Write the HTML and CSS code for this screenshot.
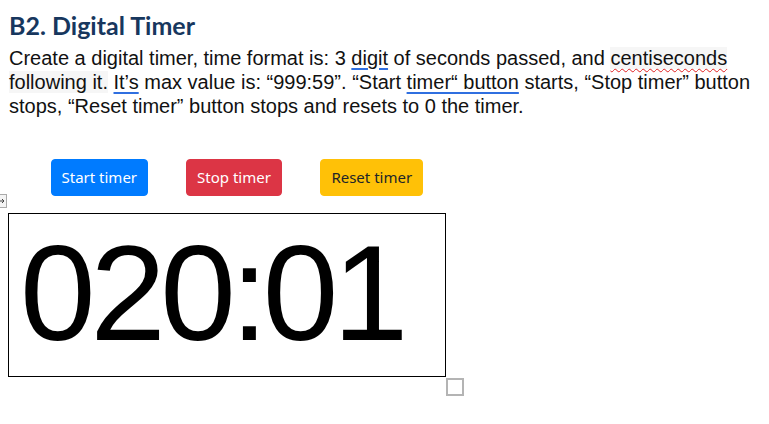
FILE: index.html
```html
<!DOCTYPE html>
<html>
<head>
<meta charset="utf-8">
<link rel="stylesheet" href="styles.css">
</head>
<body>
<div class="doc">
  <h1 class="title">B2. Digital Timer</h1>
  <p class="desc">Create a digital timer, time format is: 3 <span class="gram">digit</span> of seconds passed, and <span class="hl spell">centiseconds</span><br><span class="hl">following it.</span> <span class="gram">It’s</span> max value is: “999:59”. “Start <span class="gram">timer“ button</span> starts, “Stop timer” button<br>stops, “Reset timer” button stops and resets to 0 the timer.</p>
  <div class="buttons">
    <button class="btn btn-start">Start timer</button>
    <button class="btn btn-stop">Stop timer</button>
    <button class="btn btn-reset">Reset timer</button>
  </div>
  <div class="timer-wrap">
    <div class="move-handle">
      <svg width="8" height="8" viewBox="0 0 8 8"><path d="M0 4h6M4 2l2 2-2 2" stroke="#444" stroke-width="1" fill="none"/></svg>
    </div>
    <div class="timer">020:01</div>
    <div class="resize-handle"></div>
  </div>
</div>
</body>
</html>
```
FILE: styles.css
```css
html, body {
  margin: 0;
  padding: 0;
  background: #fff;
  min-height: 424px;
}
.doc {
  padding: 10px 0 0 9px;
  min-height: 414px;
}
.title {
  margin: 0;
  font-family: Lato, "Open Sans", sans-serif;
  font-weight: 700;
  font-size: 25px;
  line-height: 30px;
  color: #17375e;
}
.desc {
  margin: 6px 0 0 0;
  font-family: "Liberation Sans", Arial, sans-serif;
  font-size: 20px;
  line-height: 24px;
  color: #111;
  white-space: nowrap;
}
.gram {
  text-decoration: underline;
  text-decoration-color: #2f6fe0;
  text-decoration-thickness: 2px;
  text-underline-offset: 3px;
}
.spell {
  text-decoration: underline wavy #e02020;
  text-decoration-thickness: 1px;
  text-underline-offset: 3px;
}
.hl {
  background: #f6f6f6;
}
.buttons {
  display: flex;
  gap: 38px;
  margin: 41px 0 0 42px;
}
.btn {
  font-family: "Noto Sans", "Open Sans", sans-serif;
  font-size: 15px;
  line-height: 23px;
  padding: 6px 9.5px;
  border: 1px solid transparent;
  border-radius: 4px;
  color: #fff;
  cursor: pointer;
}
.btn-start {
  background: #007bff;
  border-color: #007bff;
}
.btn-stop {
  background: #dc3545;
  border-color: #dc3545;
  padding: 6px 10.5px;
}
.btn-reset {
  background: #ffc107;
  border-color: #ffc107;
  color: #212529;
  padding: 6px 10px;
}
.timer-wrap {
  position: relative;
  margin: 17px 0 0 -1px;
  width: 438px;
}
.timer {
  box-sizing: border-box;
  width: 438px;
  height: 164px;
  border: 1px solid #000;
  padding: 11px 0 0 11px;
  font-family: "Liberation Sans", Arial, sans-serif;
  font-size: 136px;
  line-height: 136px;
  letter-spacing: -5.5px;
  color: #000;
  white-space: nowrap;
}
.move-handle {
  position: absolute;
  left: -13px;
  top: -19px;
  width: 10px;
  height: 12px;
  border: 1px solid #aaa;
  background: #f4f4f4;
  display: flex;
  align-items: center;
  justify-content: flex-end;
}
.resize-handle {
  position: absolute;
  left: 438px;
  top: 165px;
  width: 14px;
  height: 14px;
  border: 2px solid #b4b4b4;
  background: #fff;
  z-index: 2;
}
```
